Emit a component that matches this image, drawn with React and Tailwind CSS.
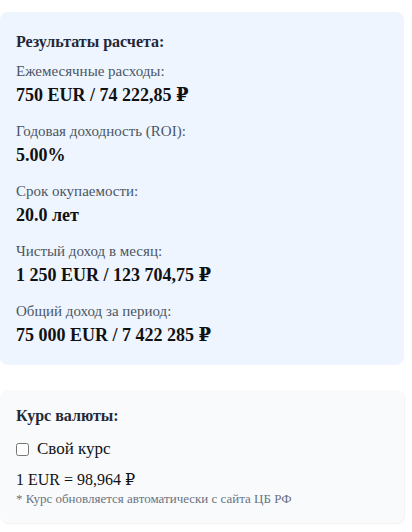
import { useState } from "react";

const rows = [
  { label: "Ежемесячные расходы:", value: "750 EUR / 74 222,85 ₽" },
  { label: "Годовая доходность (ROI):", value: "5.00%" },
  { label: "Срок окупаемости:", value: "20.0 лет" },
  { label: "Чистый доход в месяц:", value: "1 250 EUR / 123 704,75 ₽" },
  { label: "Общий доход за период:", value: "75 000 EUR / 7 422 285 ₽" },
];

function App() {
  const [custom, setCustom] = useState(false);

  return (
    <div
      className="min-h-screen bg-white pt-3 pr-2"
      style={{ fontFamily: '"Liberation Serif", "DejaVu Serif", serif' }}
    >
      <div className="bg-[#eef5ff] rounded-lg p-4">
        <h3 className="text-base leading-7 font-bold text-[#1f2937] mb-[5px]">
          Результаты расчета:
        </h3>
        <div className="flex flex-col gap-3">
          {rows.map((r) => (
            <div key={r.label}>
              <div className="text-[15px] leading-5 text-[#4b5563]">{r.label}</div>
              <div className="text-lg leading-7 font-bold text-[#111]">
                {r.value}
              </div>
            </div>
          ))}
        </div>
      </div>

      <div className="mt-[25px] bg-[#f8fafc] rounded-lg p-4 shadow-[1px_1px_2px_rgba(0,0,0,0.06)]">
        <h3 className="text-base leading-5 font-bold text-[#1f2937] mb-[11px]">
          Курс валюты:
        </h3>
        <label className="flex items-center gap-2 h-6 mb-2 text-[17px] text-[#111] cursor-pointer">
          <input
            type="checkbox"
            checked={custom}
            onChange={(e) => setCustom(e.target.checked)}
            className="w-[13px] h-[13px]"
          />
          Свой курс
        </label>
        <div className="text-base leading-[22px] text-[#111]">1 EUR = 98,964 ₽</div>
        <div className="text-[13px] leading-4 text-[#6b7280]">
          * Курс обновляется автоматически с сайта ЦБ РФ
        </div>
      </div>
    </div>
  );
}

export default App;
